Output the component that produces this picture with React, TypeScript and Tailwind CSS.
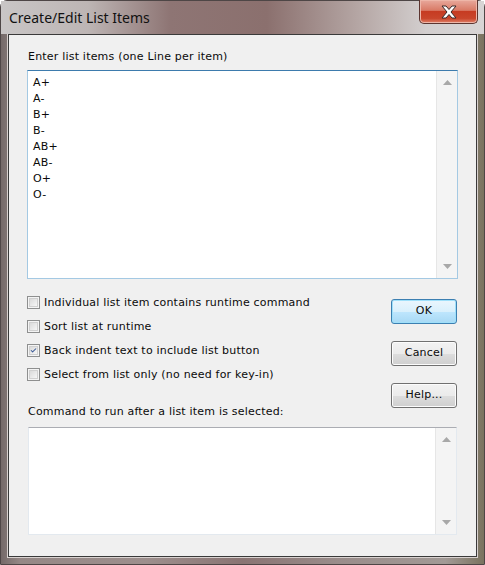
import { Check } from 'lucide-react'

const items = ['A+', 'A-', 'B+', 'B-', 'AB+', 'AB-', 'O+', 'O-']

const options = [
  { label: 'Individual list item contains runtime command', checked: false },
  { label: 'Sort list at runtime', checked: false },
  { label: 'Back indent text to include list button', checked: true },
  { label: 'Select from list only (no need for key-in)', checked: false },
]

const font = "font-['DejaVu_Sans',sans-serif] text-[11px] tracking-[0.2px] text-[#0a0a0a]"

function Scrollbar() {
  return (
    <div className="flex w-[21px] flex-col items-center justify-between border-l border-[#e6e6e6] bg-[#f4f4f4] py-[9px]">
      <svg width="9" height="5" viewBox="0 0 9 5">
        <path d="M0 5 L4.5 0 L9 5 Z" fill="#a8a8a8" />
      </svg>
      <svg width="9" height="5" viewBox="0 0 9 5">
        <path d="M0 0 L4.5 5 L9 0 Z" fill="#a8a8a8" />
      </svg>
    </div>
  )
}

function WinButton({ label, primary }: { label: string; primary?: boolean }) {
  return (
    <div
      className={
        primary
          ? 'flex h-[25px] w-[66px] items-center justify-center rounded-[3px] border border-[#3c7fb1] bg-[linear-gradient(#eaf6fd_0%,#d9f0fc_50%,#bee6fd_51%,#a7d9f5_100%)] shadow-[inset_0_0_0_1px_#9fe0fa]'
          : 'flex h-[25px] w-[66px] items-center justify-center rounded-[3px] border border-[#707070] bg-[linear-gradient(#f2f2f2_0%,#ebebeb_50%,#dddddd_51%,#cfcfcf_100%)] shadow-[inset_0_0_0_1px_#fcfcfc]'
      }
    >
      <span className={font}>{label}</span>
    </div>
  )
}

export default function App() {
  return (
    <div className="h-[565px] w-[485px] bg-white">
      <div className="flex h-[565px] w-[485px] flex-col rounded-t-[7px] border border-[#4e4646] bg-[linear-gradient(90deg,#756a69_0%,#958886_4%,#9d8f8d_30%,#8a7473_50%,#9a8d8b_70%,#a29a96_92%,#7a735f_100%)]">
        {/* title bar */}
        <div className="relative flex h-[33px] shrink-0 bg-[linear-gradient(90deg,#c9c6c6_0%,#bdb5b4_18%,#8e7574_35%,#8b706e_55%,#b7a9a7_75%,#d3cfcf_88%,#d8d5d5_100%)] pl-[8px]">
          <span className="mt-[8px] font-['Noto_Sans',sans-serif] text-[14px] leading-[18px] text-[#111]">
            Create/Edit List Items
          </span>
          <div className="absolute right-[6px] top-[-1px] flex h-[24px] w-[59px] items-center justify-center rounded-b-[5px] border border-t-0 border-[#5c3530] bg-[linear-gradient(#e8a99c_0%,#d97a66_45%,#c63b22_50%,#c9452b_80%,#e1826a_100%)] shadow-[inset_0_0_0_1px_#eeb6a8]">
            <svg width="18" height="14" viewBox="0 0 18 14">
              <path
                d="M2 1 L6 1 L9 4.5 L12 1 L16 1 L11 7 L16 13 L12 13 L9 9.5 L6 13 L2 13 L7 7 Z"
                fill="#ffffff"
                stroke="#3a2a2a"
                strokeWidth="1"
                strokeLinejoin="round"
              />
            </svg>
          </div>
        </div>

        {/* client area */}
        <div className="mx-[7px] flex h-[523px] flex-col border border-[#3a3a3a] bg-[#f0f0f0] shadow-[0_0_0_1px_#d9d2d0]">
          <div className={`${font} ml-[19px] mt-[15px] leading-[14px]`}>Enter list items (one Line per item)</div>

          <div className="ml-[18px] mt-[6px] flex h-[209px] w-[431px] border border-[#a4c9e3] border-t-[#3d7bad] bg-white">
            <div className={`${font} flex-1 pl-[5px] pt-[4px] leading-[16px]`}>
              {items.map((item) => (
                <div key={item}>{item}</div>
              ))}
            </div>
            <Scrollbar />
          </div>

          <div className="flex w-[448px] justify-between pl-[18px]">
            <div className="flex flex-col">
              <div className="mt-[17px] flex flex-col gap-[11px]">
                {options.map((opt) => (
                  <div key={opt.label} className="flex h-[13px] items-center gap-[4px]">
                    <div className="flex h-[13px] w-[13px] items-center justify-center border border-[#8e8f8f] bg-[#f4f4f4]">
                      <div className="flex h-[9px] w-[9px] items-center justify-center border border-[#d0d0d0] bg-[linear-gradient(135deg,#dadada,#f6f6f6)]">
                        {opt.checked && <Check className="h-[11px] w-[11px] text-[#3a5a96]" strokeWidth={3.5} />}
                      </div>
                    </div>
                    <span className={`${font} leading-[14px]`}>{opt.label}</span>
                  </div>
                ))}
              </div>
              <div className={`${font} ml-[1px] mt-[24px] leading-[14px]`}>Command to run after a list item is selected:</div>
            </div>
            <div className="mt-[20px] flex flex-col gap-[17px]">
              <WinButton label="OK" primary />
              <WinButton label="Cancel" />
              <WinButton label="Help..." />
            </div>
          </div>

          <div className="ml-[19px] mt-[8px] flex h-[108px] w-[429px] border border-[#e3e9ef] border-t-[#abadb3] bg-white">
            <div className="flex-1" />
            <Scrollbar />
          </div>
        </div>
      </div>
    </div>
  )
}
